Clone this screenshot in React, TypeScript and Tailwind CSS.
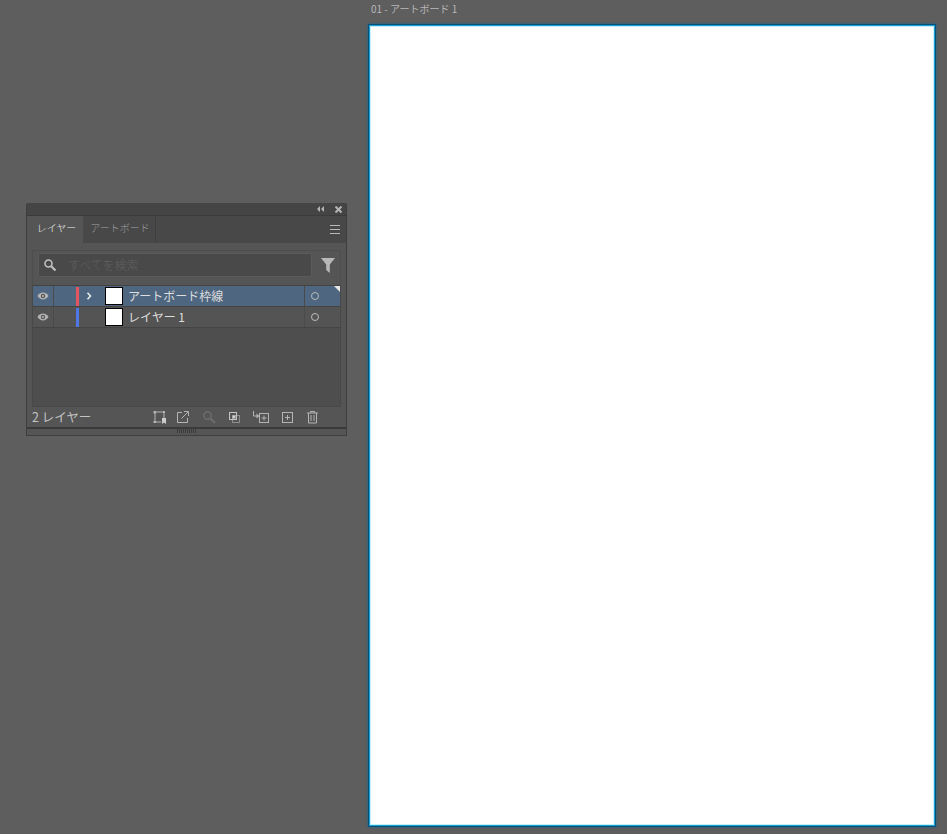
import type { ReactNode } from 'react';

const font = '[font-family:"Noto_Sans_CJK_JP","Liberation_Sans",sans-serif]';

function Eye() {
  return (
    <svg width="12" height="8" viewBox="0 0 12 8" className="block">
      <path d="M0.5 4C2 1.6 4 .6 6 .6S10 1.6 11.5 4C10 6.4 8 7.4 6 7.4S2 6.4 .5 4Z" fill="#b4b4b4" />
      <circle cx="6" cy="4" r="2.2" fill="#555555" />
      <circle cx="6" cy="4" r="1.1" fill="#b4b4b4" />
    </svg>
  );
}

function LayerRow({
  name,
  color,
  selected,
  chevron,
}: {
  name: string;
  color: string;
  selected?: boolean;
  chevron?: boolean;
}) {
  return (
    <div
      className={`relative flex h-[21px] items-center border-b border-[#444444] ${selected ? 'bg-[#4e6680]' : 'bg-[#545454]'}`}
    >
      <div className="flex h-full w-[21px] items-center justify-center border-r border-[#4a4a4a]">
        <Eye />
      </div>
      <div className="flex h-full w-[25px] items-center justify-end">
        <div className="h-[19px] w-[3px]" style={{ background: color }} />
      </div>
      <div className="flex h-full w-[26px] items-center justify-center">
        {chevron && (
          <svg width="6" height="8" viewBox="0 0 6 8" fill="none" stroke="#f0f0f0" strokeWidth="1.5" className="mr-[6px]">
            <path d="M1.5 .8 4.5 4 1.5 7.2" />
          </svg>
        )}
      </div>
      <div className="h-[18px] w-[18px] border border-black bg-white" />
      <div className={`ml-[5px] w-[176px] text-[12px] leading-none text-[#dedede] ${font}`}>{name}</div>
      <div className="flex h-full flex-1 items-center border-l border-[#4a4a4a] pl-[6px]">
        <div className="h-[8px] w-[8px] rounded-full border border-[#bcbcbc]" />
      </div>
      {selected && (
        <svg width="6" height="6" viewBox="0 0 6 6" className="absolute top-0 right-0">
          <path d="M0 0H6V6Z" fill="#e8e8e8" />
        </svg>
      )}
    </div>
  );
}

function FooterIcon({ children, dim }: { children: ReactNode; dim?: boolean }) {
  return (
    <svg
      width="16"
      height="14"
      viewBox="0 0 16 14"
      fill="none"
      stroke={dim ? '#6c6c6c' : '#b4b4b4'}
      strokeWidth="1"
      className="block"
    >
      {children}
    </svg>
  );
}

export default function App() {
  return (
    <div className="flex h-[834px] w-[947px] overflow-hidden bg-[#5e5e5e]">
      <div className="w-[368px] shrink-0 pt-[203px] pl-[26px]">
        <div className="flex h-[233px] w-[321px] flex-col rounded-t-[2px] border border-t-0 border-[#3e3e3e] bg-[#555555]">
          <div className="flex h-[13px] items-center justify-end gap-[11px] border-b border-[#3a3a3a] bg-[#454545] pr-[4px]">
            <svg width="7" height="6" viewBox="0 0 7 6" fill="#b4b4b4">
              <path d="M3 0V6L0 3ZM7 0V6L4 3Z" />
            </svg>
            <svg width="7" height="7" viewBox="0 0 7 7" stroke="#b4b4b4" strokeWidth="2">
              <path d="M.5 .5 6.5 6.5M6.5 .5 .5 6.5" />
            </svg>
          </div>

          <div className={`flex h-[27px] items-stretch bg-[#484848] ${font} font-light`}>
            <div className="flex w-[56px] items-center justify-center bg-[#555555] pb-[5px] pl-[3px] text-[10px] text-[#f0f0f0]">
              レイヤー
            </div>
            <div className="flex w-[73px] items-center justify-center border-r border-[#3e3e3e] pb-[5px] pl-[2px] text-[10px] text-[#a0a0a0]">
              アートボード
            </div>
            <div className="flex flex-1 items-center justify-end pr-[6px]">
              <div className="flex h-[9px] w-[10px] flex-col justify-between">
                <div className="h-px bg-[#b8b8b8]" />
                <div className="h-px bg-[#b8b8b8]" />
                <div className="h-px bg-[#b8b8b8]" />
              </div>
            </div>
          </div>

          <div className="flex flex-1 flex-col px-[5px]">
            <div className="mt-[7px] flex h-[35px] items-start border border-b-0 border-[#4e4e4e] pt-[2px] pl-[5px]">
              <div className="flex h-[24px] w-[274px] items-center rounded-[2px] border border-[#5a5a5a] bg-[#494949] pl-[4px]">
                <svg width="14" height="14" viewBox="0 0 14 14" fill="none" stroke="#c0c0c0" className="block">
                  <circle cx="5.5" cy="5.5" r="3.5" strokeWidth="1.6" />
                  <path d="M8.2 8.2 12.5 12.5" strokeWidth="2.2" />
                </svg>
                <span className={`ml-[11px] text-[12px] leading-none font-light text-[#606060] ${font}`}>すべてを検索</span>
              </div>
              <svg width="14" height="15" viewBox="0 0 14 15" fill="#b8b8b8" className="mt-[5px] ml-[9px] block">
                <path d="M0 0H14L8.8 6.5V15L5.2 12V6.5Z" />
              </svg>
            </div>

            <div className="flex h-[122px] flex-col border border-t-[#424242] border-r-[#484848] border-b-[#484848] border-l-[#484848] bg-[#4e4e4e]">
              <LayerRow name="アートボード枠線" color="#e4545f" selected chevron />
              <LayerRow name="レイヤー 1" color="#4f78e6" />
            </div>

            <div className="flex h-[20px] items-center">
              <span className={`w-[120px] text-[12.5px] leading-none text-[#c4c4c4] ${font}`}>2 レイヤー</span>
              <div className="flex items-center">
                <FooterIcon>
                  <path d="M3 2H12M3 2V12M3 12H9M12 2V8" />
                  <path d="M1.5 1H4V3.5H1.5ZM11 1H13V3H11ZM1.5 11H4V13H1.5Z" fill="#b4b4b4" stroke="none" />
                  <path d="M10 8H14V14L12 12.5 10 14Z" fill="#cccccc" stroke="none" />
                </FooterIcon>
                <div className="ml-[7px]">
                  <FooterIcon>
                    <path d="M7 2.5H2.5V12.5H12.5V8" />
                    <path d="M6.5 8.5 13 2M9 1.5H13.5V6" />
                  </FooterIcon>
                </div>
                <div className="ml-[10px]">
                  <FooterIcon dim>
                    <circle cx="6.5" cy="5.5" r="3.7" strokeWidth="1.5" />
                    <path d="M9.5 8.5 14 13" strokeWidth="2" />
                  </FooterIcon>
                </div>
                <div className="ml-[10px]">
                  <FooterIcon>
                    <rect x="5.5" y="5.5" width="7" height="7" stroke="#8c8c8c" />
                    <rect x="5.5" y="5.5" width="3" height="3" fill="#d0d0d0" stroke="none" />
                    <rect x="2.5" y="2.5" width="7" height="7" stroke="#c4c4c4" />
                  </FooterIcon>
                </div>
                <svg width="18" height="14" viewBox="0 0 18 14" fill="none" stroke="#b4b4b4" className="ml-[9px] block">
                  <path d="M1.5 1V6H5" />
                  <path d="M4.5 3.5 7.5 6 4.5 8.5Z" fill="#b4b4b4" stroke="none" />
                  <rect x="7.5" y="3.5" width="9" height="9" />
                  <path d="M12 5.5V10.5M9.5 8H14.5" />
                </svg>
                <div className="ml-[10px]">
                  <FooterIcon>
                    <rect x="2.5" y="2.5" width="10" height="10" />
                    <path d="M7.5 5V10M5 7.5H10" />
                  </FooterIcon>
                </div>
                <div className="ml-[9px]">
                  <FooterIcon>
                    <path d="M2 3H13M5.5 3V1.5H9.5V3M3.5 3V13H11.5V3M6 5V11M9 5V11" />
                  </FooterIcon>
                </div>
              </div>
            </div>
          </div>

          <div className="flex h-[8px] justify-center border-t-2 border-[#3a3a3a] bg-[#555555]">
            <div className="-mt-[1px] h-[5px] w-[20px] bg-[repeating-linear-gradient(90deg,#3c3c3c_0,#3c3c3c_1px,transparent_1px,transparent_2px)]" />
          </div>
        </div>
      </div>

      <div className="flex flex-col">
        <div className={`flex h-[24px] items-center pb-[6px] pl-[3px] text-[10px] leading-none text-[#b8b8b8] ${font}`}>
          01 - アートボード 1
        </div>
        <div className="h-[803px] w-[568px] border border-[#0a4f78] bg-white shadow-[inset_0_0_0_1px_#18a0d0,inset_0_0_0_2px_#c4f0fa,0_0_2px_#0a6c9c]" />
      </div>
    </div>
  );
}
